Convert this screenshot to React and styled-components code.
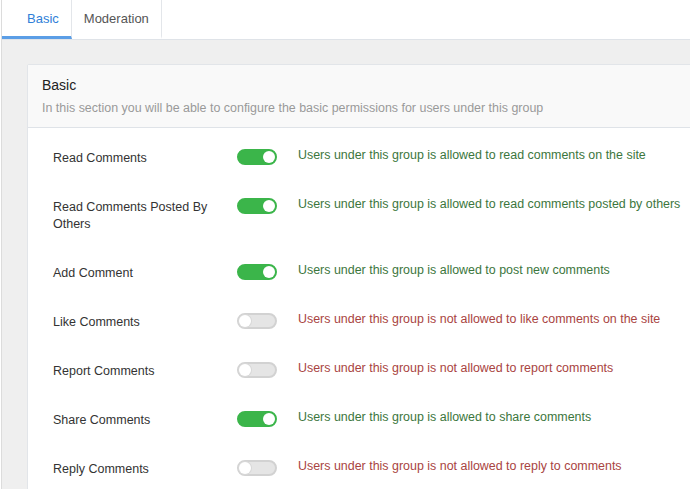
import React, { useState } from "react";
import styled, { createGlobalStyle } from "styled-components";

const GlobalStyle = createGlobalStyle`
  html, body {
    margin: 0;
    padding: 0;
    background: #fff;
    overflow: hidden;
  }
  body {
    font-family: "Liberation Sans", Arial, sans-serif;
    font-size: 12px;
    color: #333;
  }
`;

const permissionsList = [
  { key: "read", label: "Read Comments", on: true, on_text: "read comments on the site" },
  { key: "readOthers", label: "Read Comments Posted By Others", on: true, on_text: "read comments posted by others" },
  { key: "add", label: "Add Comment", on: true, on_text: "post new comments" },
  { key: "like", label: "Like Comments", on: false, on_text: "like comments on the site" },
  { key: "report", label: "Report Comments", on: false, on_text: "report comments" },
  { key: "share", label: "Share Comments", on: true, on_text: "share comments" },
  { key: "reply", label: "Reply Comments", on: false, on_text: "reply to comments" },
];

const App = () => {
  const [tab, setTab] = useState("basic");
  const [perms, setPerms] = useState(
    Object.fromEntries(permissionsList.map((p) => [p.key, p.on]))
  );

  const toggle = (key) => setPerms({ ...perms, [key]: !perms[key] });

  return (
    <>
      <GlobalStyle />
      <Page>
        <Tabs>
          <Tab first active={tab === "basic"} onClick={() => setTab("basic")}>
            Basic
          </Tab>
          <Tab active={tab === "moderation"} onClick={() => setTab("moderation")}>
            Moderation
          </Tab>
        </Tabs>
        <Content>
          <Card>
            <CardHeader>
              <CardTitle>Basic</CardTitle>
              <CardSubtitle>
                In this section you will be able to configure the basic permissions for users under this group
              </CardSubtitle>
            </CardHeader>
            <CardBody>
              {permissionsList.map((p) => (
                <Row key={p.key}>
                  <Label>{p.label}</Label>
                  <Switch on={perms[p.key]} onClick={() => toggle(p.key)}>
                    <Knob on={perms[p.key]} />
                  </Switch>
                  <Description on={perms[p.key]}>
                    Users under this group is {perms[p.key] ? "allowed" : "not allowed"} to {p.on_text}
                  </Description>
                </Row>
              ))}
            </CardBody>
          </Card>
        </Content>
      </Page>
    </>
  );
};

const Page = styled.div`
  margin-left: 1px;
  border-left: 1px solid #dcdcdc;
  min-height: 489px;
  background: #efefef;
  display: flex;
  flex-direction: column;
`;

const Tabs = styled.div`
  display: flex;
  height: 39px;
  background: #fff;
  border-bottom: 1px solid #dfe3e8;
`;

const Tab = styled.div`
  display: flex;
  align-items: center;
  padding: 0 12px 0 ${(p) => (p.first ? "25px" : "12px")};
  font-size: 13px;
  color: ${(p) => (p.active ? "#2f80d8" : "#555")};
  border-right: 1px solid #e3e6ea;
  border-bottom: 3px solid ${(p) => (p.active ? "#5b9ee6" : "transparent")};
  cursor: pointer;
`;

const Content = styled.div`
  padding: 24px 0 0 25px;
`;

const Card = styled.div`
  margin-right: -20px;
  background: #fff;
  border: 1px solid #e2e5e9;
  border-radius: 2px;
`;

const CardHeader = styled.div`
  background: #f9f9f9;
  border-bottom: 1px solid #dfe3e8;
  padding: 12px 14px 10px;
`;

const CardTitle = styled.div`
  font-size: 14px;
  line-height: 17px;
  color: #222;
`;

const CardSubtitle = styled.div`
  margin-top: 6px;
  font-size: 12.45px;
  line-height: 17px;
  color: #999;
`;

const CardBody = styled.div`
  padding: 6px 0 0 25px;
`;

const Row = styled.div`
  display: flex;
  align-items: flex-start;
  padding: 16px 0;
  line-height: 17px;
`;

const Label = styled.div`
  flex: none;
  width: 172px;
  margin-right: 12px;
  color: #333;
  font-size: 12.5px;
`;

const Switch = styled.div`
  flex: none;
  box-sizing: border-box;
  position: relative;
  width: 40px;
  height: 16px;
  margin-top: -1px;
  border-radius: 8px;
  background: ${(p) => (p.on ? "#3bb54a" : "#e5e5e5")};
  border: 2px solid ${(p) => (p.on ? "#3bb54a" : "#d2d2d2")};
  cursor: pointer;
`;

const Knob = styled.span`
  position: absolute;
  top: 0;
  left: ${(p) => (p.on ? "24px" : "0")};
  width: 12px;
  height: 12px;
  border-radius: 50%;
  background: #fff;
  box-shadow: ${(p) => (p.on ? "none" : "0 0 0 1px #d8d8d8")};
`;

const Description = styled.div`
  margin-left: 21px;
  margin-top: -3px;
  white-space: nowrap;
  font-size: 12.45px;
  color: ${(p) => (p.on ? "#3c763d" : "#a94442")};
`;

export default App;
